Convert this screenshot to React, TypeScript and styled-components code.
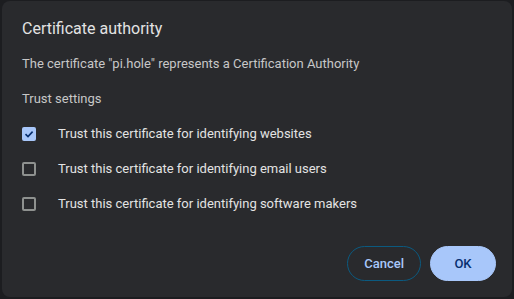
import styled, { createGlobalStyle } from "styled-components";

const GlobalStyle = createGlobalStyle`
  html, body {
    margin: 0;
    padding: 0;
    background: #1c1d20;
  }
  body {
    font-family: Roboto, "Noto Sans", sans-serif;
  }
`;

const Backdrop = styled.div`
  width: 514px;
  height: 299px;
  padding: 1px 2px 2px 2px;
  box-sizing: border-box;
`;

const Dialog = styled.div`
  width: 510px;
  height: 296px;
  box-sizing: border-box;
  background: #292a2d;
  border-radius: 8px;
  padding: 18px 16px 16px 20px;
  display: flex;
  flex-direction: column;
`;

const Title = styled.h1`
  margin: 0;
  font-size: 16px;
  font-weight: 400;
  color: #e3e3e3;
  line-height: 20px;
`;

const Text = styled.p<{ $gap: number }>`
  margin: ${({ $gap }) => $gap}px 0 0;
  font-size: 13px;
  line-height: 16px;
  color: #c7c7c7;
`;

const Rows = styled.div`
  margin-top: 9px;
  display: flex;
  flex-direction: column;
`;

const Row = styled.label`
  height: 35px;
  display: flex;
  align-items: center;
  gap: 22px;
  font-size: 13px;
  color: #e3e3e3;
`;

const Box = styled.span<{ $checked?: boolean }>`
  width: 14px;
  height: 14px;
  box-sizing: border-box;
  border-radius: 2px;
  border: 2px solid ${({ $checked }) => ($checked ? "#a8c7fa" : "#8e918f")};
  background: ${({ $checked }) => ($checked ? "#a8c7fa" : "transparent")};
  display: flex;
  align-items: center;
  justify-content: center;
`;

const Footer = styled.div`
  margin-top: auto;
  display: flex;
  justify-content: flex-end;
  gap: 9px;
`;

const Button = styled.button<{ $primary?: boolean }>`
  height: 35px;
  min-width: ${({ $primary }) => ($primary ? "66px" : "73px")};
  padding: 0 16px;
  border-radius: 18px;
  font-family: Roboto, "Noto Sans", sans-serif;
  font-size: 13px;
  font-weight: 500;
  border: 1px solid ${({ $primary }) => ($primary ? "#a8c7fa" : "#0b5a80")};
  background: ${({ $primary }) => ($primary ? "#a8c7fa" : "transparent")};
  color: ${({ $primary }) => ($primary ? "#062e6f" : "#a8c7fa")};
`;

const Check = () => (
  <svg width="10" height="10" viewBox="0 0 10 10">
    <path d="M1.5 5.2 L4 7.6 L8.6 2.6" fill="none" stroke="#062e6f" strokeWidth="1.6" />
  </svg>
);

const options = [
  { label: "Trust this certificate for identifying websites", checked: true },
  { label: "Trust this certificate for identifying email users", checked: false },
  { label: "Trust this certificate for identifying software makers", checked: false },
];

const App = () => (
  <>
    <GlobalStyle />
    <Backdrop>
      <Dialog>
        <Title>Certificate authority</Title>
        <Text $gap={17}>The certificate "pi.hole" represents a Certification Authority</Text>
        <Text $gap={19}>Trust settings</Text>
        <Rows>
          {options.map((o) => (
            <Row key={o.label}>
              <Box $checked={o.checked}>{o.checked && <Check />}</Box>
              {o.label}
            </Row>
          ))}
        </Rows>
        <Footer>
          <Button>Cancel</Button>
          <Button $primary>OK</Button>
        </Footer>
      </Dialog>
    </Backdrop>
  </>
);

export default App;
